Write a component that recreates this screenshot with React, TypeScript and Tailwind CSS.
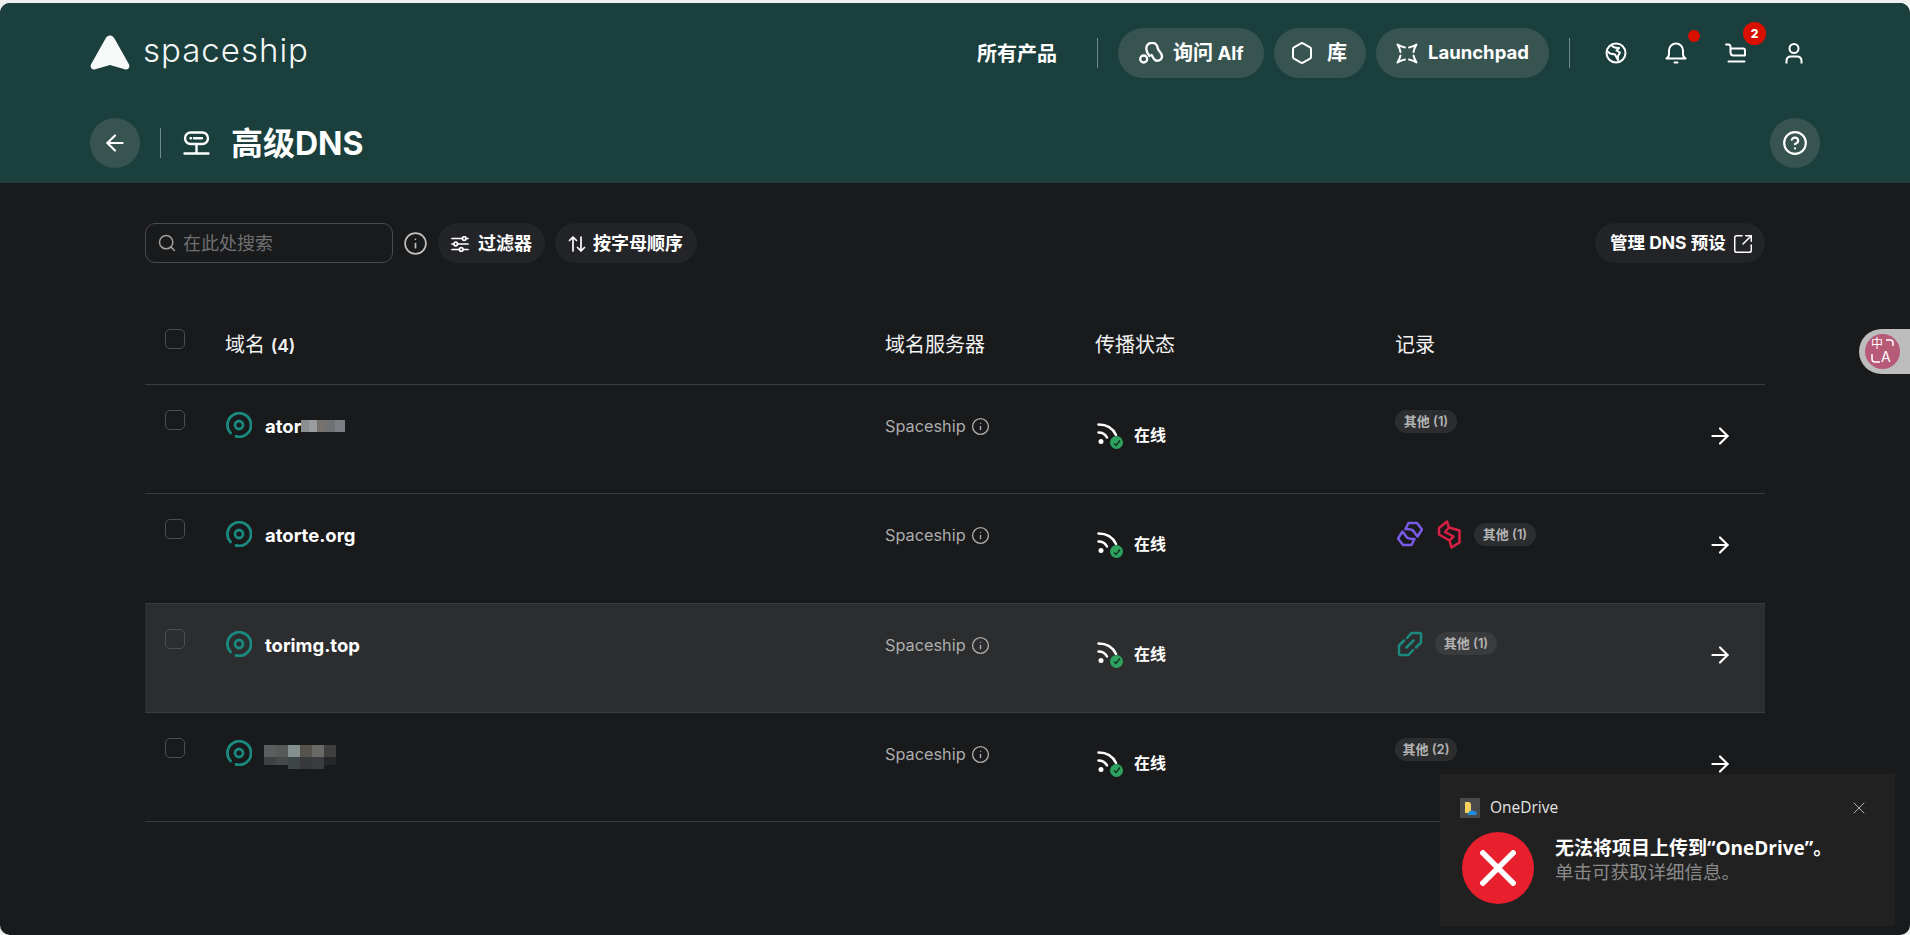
import { ArrowLeft, ArrowRight, CircleHelp, Hexagon, Info, Search, SquareArrowOutUpRight, X } from "lucide-react";

const gridCols = "grid grid-cols-[60px_660px_210px_300px_1fr] pl-5";

function Logo() {
  return (
    <svg width="40" height="36" viewBox="0 0 40 36" fill="#f7f8f8">
      <path d="M20 0.5c2.4 0 3.6 1.4 4.6 3.2L38.8 29c1.7 3.3-.6 6.4-4.2 5.3L20 30 5.4 34.3C1.8 35.4-.5 32.300 1.200 29L15.400 3.700C16.400 1.900 17.600.5 20 .5z" />
    </svg>
  );
}

function DnsIcon() {
  return (
    <svg width="27" height="25" viewBox="0 0 27 25" fill="none" stroke="#fff" strokeWidth="2.400" strokeLinecap="round">
      <rect x="2" y="1.500" width="23" height="11.500" rx="5.700" />
      <path d="M7.500 7.200h.5M11 7.200h8M13.500 13v9M1.500 22.500h24" />
    </svg>
  );
}

function AlfIcon() {
  return (
    <svg width="25" height="23" viewBox="0 0 25 23" fill="none" stroke="#fff" strokeWidth="2.300" strokeLinecap="round">
      <circle cx="4.700" cy="17" r="3.500" />
      <path d="M10.500 14C8 11 7.300 8.500 7.300 6.700A5.700 5.700 0 0 1 18.700 6.200C19 9 23 10 23 14.500A4.500 4.500 0 0 1 15 17C14 15.500 13.500 14.500 12.500 13" />
    </svg>
  );
}

function LaunchIcon() {
  return (
    <svg width="22" height="21" viewBox="0 0 22 21" fill="none" stroke="#fff" strokeWidth="2" strokeLinecap="round" strokeLinejoin="round">
      <path d="M9 4.500C6.500 4 4 3 1.500 1.500C3 4 4 6 4.500 9M13 4.500C15.500 4 18 3 20.500 1.500C19 4 18 6 17.500 9M17.500 12.500C18 15 19 17 20.500 19.500C18 18 15.500 17 13 16.500M9 16.500C6.500 17 4 18 1.500 19.500C3 17 4 15 4.500 12.500" />
    </svg>
  );
}

function GlobeIcon() {
  return (
    <svg width="22" height="22" viewBox="0 0 22 22" fill="none" stroke="#fff" strokeWidth="2" strokeLinejoin="round">
      <circle cx="11" cy="11" r="9.500" />
      <path d="M6.500 2.500c.5 2.500 2 3.500 7.500 3.500l-2.500 2.500 3.500 2-2 3.500v4l-3-5.500-5-1-3-2.500" />
    </svg>
  );
}

function BellIcon() {
  return (
    <svg width="22" height="22" viewBox="0 0 22 22" fill="none" stroke="#fff" strokeWidth="2" strokeLinecap="round" strokeLinejoin="round">
      <path d="M1.500 16.500c2-1 2.500-2.500 2.500-4.500V8.500a7 7 0 0 1 14 0V12c0 2 .5 3.500 2.500 4.500zM9.500 20.500h3" />
    </svg>
  );
}

function CartIcon() {
  return (
    <svg width="22" height="20" viewBox="0 0 22 20" fill="none" stroke="#fff" strokeWidth="2" strokeLinecap="round" strokeLinejoin="round">
      <path d="M1 1.500h2.500c1.500 0 2 1 2 2.500v5c0 2 1 3.500 3 3.500H20V7.500c0-1.200-.8-2-2-2H5.500M3.500 18.500h16" />
    </svg>
  );
}

function UserIcon() {
  return (
    <svg width="18" height="21" viewBox="0 0 18 21" fill="none" stroke="#fff" strokeWidth="2">
      <circle cx="9" cy="5.500" r="4.500" />
      <path d="M1.500 20.500V18c0-3 2-4.500 4.500-4.500h6c2.500 0 4.500 1.500 4.500 4.500v2.500" />
    </svg>
  );
}

function SlidersIcon() {
  return (
    <svg width="18" height="16" viewBox="0 0 18 16" fill="none" stroke="#fff" strokeWidth="1.700" strokeLinecap="round">
      <path d="M1 2.500h10M15.500 2.500H17M1 8h1.500M7 8h10M1 13.500h7M12.500 13.500H17" />
      <circle cx="13.200" cy="2.500" r="1.800" />
      <circle cx="4.700" cy="8" r="1.800" />
      <circle cx="10.200" cy="13.500" r="1.800" />
    </svg>
  );
}

function SortIcon() {
  return (
    <svg width="18" height="18" viewBox="0 0 18 18" fill="none" stroke="#fff" strokeWidth="1.700" strokeLinecap="round" strokeLinejoin="round">
      <path d="M5 16V2M1.500 5.500 5 2l3.500 3.500M13 2v14M9.500 12.500 13 16l3.500-3.500" />
    </svg>
  );
}

function DiskIcon() {
  return (
    <svg width="26" height="26" viewBox="0 0 26 26" fill="none" stroke="#1a8a80" strokeWidth="2.800" strokeLinecap="round">
      <path d="M4.500 21A11.800 11.800 0 1 1 10 24.400" />
      <circle cx="13" cy="13" r="4" />
    </svg>
  );
}

function OnlineIcon() {
  return (
    <span className="relative block h-[26px] w-[26px]">
      <svg width="22" height="22" viewBox="0 0 22 22" fill="none" stroke="#fff" strokeWidth="2.500" strokeLinecap="round">
        <path d="M1.500 1.500c8 0 14.500 4 17.500 10.500M1.500 9.500c4 0 7 2 8.500 5" />
        <circle cx="4" cy="18.500" r="2.500" fill="#fff" stroke="none" />
      </svg>
      <span className="absolute right-0 bottom-0 flex h-[13px] w-[13px] items-center justify-center rounded-full bg-[#2ea25f]">
        <svg width="8" height="8" viewBox="0 0 8 8" fill="none" stroke="#12301f" strokeWidth="1.400">
          <path d="M1 4.500 3 6.500 7 1.500" />
        </svg>
      </span>
    </span>
  );
}

function PurpleIcon() {
  return (
    <svg width="26" height="26" viewBox="0 0 26 26" fill="none" stroke="#7a5ae8" strokeWidth="2.500" strokeLinejoin="round">
      <path d="M8.500 8 11.500 2H20L25 8.500 20.500 15.500 16 9.500C14 8 11 8 8.500 8z" />
      <path d="M17.500 18 14.500 24H6L1 17.500 5.500 10.500 10 16.500C12 18 15 18 17.500 18z" />
    </svg>
  );
}

function RedIcon() {
  return (
    <svg width="25" height="29" viewBox="0 0 25 29" fill="none" stroke="#d91f43" strokeWidth="2.500" strokeLinejoin="round">
      <path d="M2 8 10 1.500 12 7.500 22.500 10.500V22.500L14.500 27.500 12.500 20.500 2 14.500z" />
      <path d="M12 7.500 8 12 16.500 16.500 12.500 20.500" />
    </svg>
  );
}

function TealIcon() {
  return (
    <svg width="26" height="26" viewBox="0 0 26 26" fill="none" stroke="#1a8a80" strokeWidth="2.500" strokeLinecap="round" strokeLinejoin="round">
      <path d="M10 7 14.500 2h8c1 0 1.500.7 1.500 1.500v8L19 16.500" />
      <path d="M16 19 11.500 24h-8C2.500 24 2 23.300 2 22.500v-8L7 9.500" />
      <path d="M9.500 16.500l7-7" />
    </svg>
  );
}

function OneDriveIcon() {
  return (
    <svg width="20" height="20" viewBox="0 0 20 20">
      <rect width="20" height="20" fill="#4a4a4a" />
      <path d="M5 4h4.500l1.500 2v9H5z" fill="#f5cf5e" />
      <path d="M9 17c-1.800 0-1.800-2.500 0-2.700.5-2 3.800-2.800 5-1 2.800-.5 3.800 2.700 2 3.700z" fill="#1e8ae0" />
    </svg>
  );
}

function Pill({ children, className }: { children: React.ReactNode; className: string }) {
  return (
    <button className={`flex h-[50px] items-center rounded-full bg-[#385451] text-[18.500px] font-bold text-white ${className}`}>
      {children}
    </button>
  );
}

function ToolButton({ children, className }: { children: React.ReactNode; className: string }) {
  return (
    <button className={`flex h-10 items-center rounded-full bg-[#232427] pt-px font-bold text-white ${className}`}>
      {children}
    </button>
  );
}

function Badge({ label, active }: { label: string; active?: boolean }) {
  return (
    <span className={`flex h-[23px] w-[62px] items-center justify-center rounded-full text-[13px] font-semibold text-[#b4b4b4] ${active ? "bg-[#3a3b3d]" : "bg-[#2b2d2f]"}`}>
      {label}
    </span>
  );
}

function Checkbox() {
  return <span className="block h-5 w-5 rounded-[5px] border border-[#4d4e50]" />;
}

function Mosaic1() {
  return (
    <span className="flex h-3 w-[44px]">
      <span className="w-[8px] bg-[#8c8e92]" />
      <span className="w-[8px] bg-[#9a9ca0]" />
      <span className="w-[9px] bg-[#75716d]" />
      <span className="w-[9px] bg-[#6f7074]" />
      <span className="w-[10px] bg-[#7b7f84]" />
    </span>
  );
}

function Mosaic4() {
  return (
    <span className="mt-[5px] -ml-px grid w-[72px] grid-cols-6">
      <span className="h-3 bg-[#5c5d5f]" />
      <span className="h-3 bg-[#565957]" />
      <span className="h-3 bg-[#84908d]" />
      <span className="h-3 bg-[#56534d]" />
      <span className="h-3 bg-[#696a65]" />
      <span className="h-3 bg-[#3f3f40]" />
      <span className="h-2 bg-[#3e4041]" />
      <span className="h-2 bg-[#46494a]" />
      <span className="h-3 bg-[#3e4547]" />
      <span className="h-3 bg-[#37393b]" />
      <span className="h-3 bg-[#3b3c3f]" />
      <span className="h-2 bg-[#25272a]" />
    </span>
  );
}

const rows: { name: React.ReactNode; icons?: React.ReactNode; other: string; active?: boolean }[] = [
  {
    name: (
      <span className="flex items-center">
        ator
        <Mosaic1 />
      </span>
    ),
    other: "其他 (1)",
  },
  {
    name: "atorte.org",
    icons: (
      <>
        <PurpleIcon />
        <RedIcon />
      </>
    ),
    other: "其他 (1)",
  },
  { name: "torimg.top", icons: <TealIcon />, other: "其他 (1)", active: true },
  { name: <Mosaic4 />, other: "其他 (2)" },
];

export default function App() {
  return (
    <div className="relative h-[935px] w-full overflow-hidden bg-[#eef0f0] pt-[3px] font-[Inter,'Noto_Sans_CJK_SC',sans-serif]">
      <div className="h-[932px] overflow-hidden rounded-[10px] bg-[#191a1c]">
        <header className="h-[180px] bg-[#1a3f3c] px-[90px]">
          <div className="flex h-[100px] items-center">
            <Logo />
            <span className="mb-[4px] ml-[13px] font-[Inter] text-[33px] font-light tracking-[1px] text-[#f4f6f6]">spaceship</span>
            <nav className="ml-auto flex items-center pr-[17px]">
              <a className="pt-px text-[20px] font-bold text-white">所有产品</a>
              <span className="mr-[20px] ml-[40px] h-[30px] w-px bg-[#6f8a87]" />
              <div className="flex gap-[10px]">
                <Pill className="w-[146px]">
                  <span className="ml-[21px]"><AlfIcon /></span>
                  <span className="ml-[9px] whitespace-nowrap"><span className="text-[20px]">询问</span> Alf</span>
                </Pill>
                <Pill className="w-[92px]">
                  <Hexagon size={24} strokeWidth={2} className="ml-[16px]" />
                  <span className="ml-[13px] text-[20px]">库</span>
                </Pill>
                <Pill className="w-[173px]">
                  <span className="ml-[20px]"><LaunchIcon /></span>
                  <span className="ml-[10px]">Launchpad</span>
                </Pill>
              </div>
              <span className="mr-[35px] ml-[20px] h-[30px] w-px bg-[#6f8a87]" />
              <div className="flex items-center gap-[38px]">
                <GlobeIcon />
                <span className="relative">
                  <BellIcon />
                  <span className="absolute -top-[12px] -right-[13px] h-3 w-3 rounded-full bg-[#d90f00]" />
                </span>
                <span className="relative">
                  <CartIcon />
                  <span className="absolute -top-[21px] -right-[19px] flex h-[23px] w-[23px] items-center justify-center rounded-full bg-[#d90f00] text-[12px] font-extrabold text-white">2</span>
                </span>
                <UserIcon />
              </div>
            </nav>
          </div>
          <div className="mt-[15px] flex h-[50px] items-center">
            <button className="flex h-[50px] w-[50px] items-center justify-center rounded-full bg-[#385451]">
              <ArrowLeft size={26} strokeWidth={2} color="#fff" />
            </button>
            <span className="mx-[20px] h-[30px] w-px bg-[#6f8a87]" />
            <span className="ml-[2px]"><DnsIcon /></span>
            <h1 className="ml-[21px] pt-[2px] text-[32px] font-bold text-white">高级DNS</h1>
            <button className="ml-auto flex h-[50px] w-[50px] items-center justify-center rounded-full bg-[#385451]">
              <CircleHelp size={26} strokeWidth={2} color="#fff" />
            </button>
          </div>
        </header>

        <main className="px-[145px] pt-10">
          <div className="flex h-10 items-center">
            <div className="flex h-10 w-[248px] items-center rounded-[10px] border border-[#4a4b4d] pl-[11px]">
              <Search size={20} strokeWidth={1.8} color="#a0a0a0" />
              <span className="ml-[6px] text-[18px] text-[#6f7072]">在此处搜索</span>
            </div>
            <Info size={25} strokeWidth={1.6} color="#c0c0c0" className="ml-[10px]" />
            <ToolButton className="ml-[10px] w-[107px] gap-[9px] pl-[13px] text-[18px]">
              <SlidersIcon />
              过滤器
            </ToolButton>
            <ToolButton className="ml-[10px] w-[142px] gap-[7px] pl-[13px] text-[18px]">
              <SortIcon />
              按字母顺序
            </ToolButton>
            <ToolButton className="ml-auto w-[170px] gap-[6px] pl-[15px] text-[17.500px] whitespace-nowrap">
              管理 DNS 预设
              <SquareArrowOutUpRight size={22} strokeWidth={1.6} />
            </ToolButton>
          </div>

          <div className={`${gridCols} mt-[23px] h-[99px] border-b border-[#3a3b3d] pt-[44px] text-[20px] text-[#f2f2f2]`}>
            <span className="-mt-[1px]"><Checkbox /></span>
            <span>域名 <b className="text-[17.500px] font-semibold">(4)</b></span>
            <span>域名服务器</span>
            <span>传播状态</span>
            <span>记录</span>
          </div>

          {rows.map((row, i) => (
            <div key={i} className={`${gridCols} h-[109.3px] border-b border-[#3a3b3d] ${row.active ? "bg-[#2c2d2f]" : ""}`}>
              <span className="pt-[25px]"><Checkbox /></span>
              <div className="flex items-start gap-[13px] pt-[27px] pl-[1px] text-[18.500px] leading-[28px] font-bold text-white">
                <DiskIcon />
                {row.name}
              </div>
              <div className="flex items-start gap-[5px] pt-[29px] text-[16.300px] leading-[24px] text-[#adadad]">
                Spaceship
                <Info size={19} strokeWidth={1.7} className="mt-[3px]" />
              </div>
              <div className="flex items-start gap-[11px] pt-[38px] pl-[2px] text-[16px] leading-[24px] font-bold text-white">
                <OnlineIcon />
                在线
              </div>
              <div className="flex items-start justify-between pt-[25px] pr-[32px]">
                <div className={`flex items-center gap-[12px] ${row.icons ? "h-[30px]" : ""}`}>
                  {row.icons && <div className="ml-[2px] flex items-center gap-[14px]">{row.icons}</div>}
                  <Badge label={row.other} active={row.active} />
                </div>
                <ArrowRight size={26} strokeWidth={2} color="#fff" className="mt-[13px]" />
              </div>
            </div>
          ))}
        </main>
      </div>

      {/* 翻译按钮 */}
      <div className="absolute top-[329px] right-0 flex h-[45px] w-[51px] items-center rounded-l-full bg-[#bdbdbd] pl-[6px]">
        <span className="relative block h-[35px] w-[35px] rounded-full bg-[#b65a78] text-white">
          <span className="absolute top-[4px] left-[6px] text-[12px] leading-none">中</span>
          <span className="absolute top-[16px] left-[16px] text-[14px] leading-none">A</span>
          <svg width="35" height="35" viewBox="0 0 35 35" fill="none" stroke="#fff" strokeWidth="1.500" className="absolute inset-0">
            <path d="M21 6h4c2 0 3 1 3 3v3M7 20v5c0 2 1 3 3 3h5" />
          </svg>
        </span>
      </div>

      {/* 系统通知 */}
      <div className="absolute top-[774px] left-[1440px] h-[152px] w-[455px] bg-[#212121] pt-[24px] pl-[20px] font-['Open_Sans','Noto_Sans_CJK_SC',sans-serif]">
        <div className="flex h-5 items-center">
          <OneDriveIcon />
          <span className="ml-[10px] text-[15.500px] text-[#e4e4e4]">OneDrive</span>
          <X size={20} strokeWidth={1.2} color="#b0b0b0" className="mr-[26px] ml-auto" />
        </div>
        <div className="mt-[14px] flex">
          <span className="ml-[2px] flex h-[72px] w-[72px] items-center justify-center rounded-full bg-[#e81f2d]">
            <svg width="36" height="36" viewBox="0 0 36 36" stroke="#fff" strokeWidth="5.500">
              <path d="M1 1 35 35M35 1 1 35" />
            </svg>
          </span>
          <div className="mt-[5px] ml-[21px] text-[19px] leading-[23px]">
            <p className="font-bold text-white">无法将项目上传到“OneDrive”。</p>
            <p className="text-[18.500px] text-[#8a8a8a]">单击可获取详细信息。</p>
          </div>
        </div>
      </div>
    </div>
  );
}
